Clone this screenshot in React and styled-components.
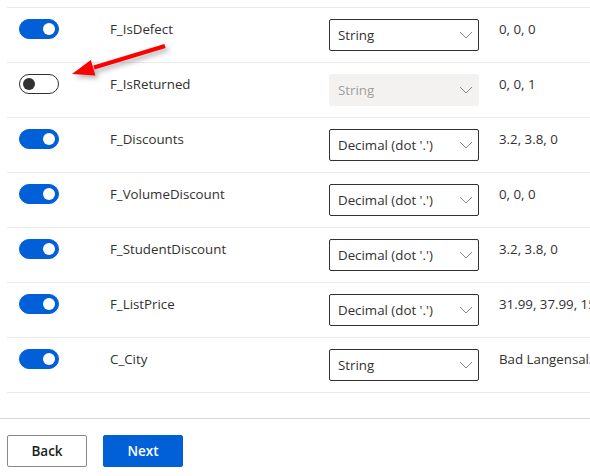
import React from "react";
import styled, { createGlobalStyle } from "styled-components";

const Global = createGlobalStyle`
  html, body { margin: 0; padding: 0; background: #ffffff; overflow: hidden; }
  body { font-family: "Segoe UI", "Open Sans", "Noto Sans", sans-serif; color: #323130; }
`;

const BLUE = "#0160d8";

const Page = styled.div`
  position: relative;
  width: 590px;
  height: 476px;
  overflow: hidden;
`;

const List = styled.div`
  margin: 7px 0 0 7px;
  border-top: 1px solid #edebe9;
`;

const Row = styled.div`
  display: grid;
  grid-template-columns: 91px 219px 170px 1fr;
  align-items: start;
  padding: 11px 0 0 12px;
  box-sizing: border-box;
  height: 55px;
  border-bottom: 1px solid #edebe9;
`;

const Toggle = styled.div`
  box-sizing: border-box;
  width: 40px;
  height: 20px;
  border-radius: 10px;
  display: flex;
  align-items: center;
  justify-content: ${(p) => (p.$on ? "flex-end" : "flex-start")};
  padding: 0 3px;
  background: ${(p) => (p.$on ? BLUE : "#ffffff")};
  border: 1px solid ${(p) => (p.$on ? BLUE : "#323130")};
`;

const Knob = styled.span`
  width: 12px;
  height: 12px;
  border-radius: 50%;
  background: ${(p) => (p.$on ? "#ffffff" : "#323130")};
`;

const Name = styled.div`
  font-size: 13.3px;
  line-height: 20px;
  color: #323130;
  white-space: nowrap;
`;

const Select = styled.div`
  box-sizing: border-box;
  width: 150px;
  height: 32px;
  display: flex;
  align-items: center;
  justify-content: space-between;
  padding: 0 5px 1px 8px;
  border-radius: 2px;
  font-size: 13.3px;
  border: 1px solid ${(p) => (p.$disabled ? "#f3f2f1" : "#323130")};
  background: ${(p) => (p.$disabled ? "#f3f2f1" : "#ffffff")};
  color: ${(p) => (p.$disabled ? "#a19f9d" : "#323130")};
`;

const Value = styled.div`
  font-size: 13.3px;
  line-height: 20px;
  color: #323130;
  white-space: nowrap;
  overflow: hidden;
`;

const Footer = styled.div`
  margin-top: 25px;
  border-top: 1px solid #d6d6d6;
  padding: 16px 7px 0;
  display: flex;
  gap: 16px;
`;

const Button = styled.button`
  box-sizing: border-box;
  width: 80px;
  height: 32px;
  border-radius: 2px;
  font-family: inherit;
  font-size: 13.5px;
  font-weight: 600;
  cursor: pointer;
  border: 1px solid ${(p) => (p.$primary ? BLUE : "#8a8886")};
  background: ${(p) => (p.$primary ? BLUE : "#ffffff")};
  color: ${(p) => (p.$primary ? "#ffffff" : "#201f1e")};
`;

const Arrow = styled.svg`
  position: absolute;
  left: 60px;
  top: 36px;
  overflow: visible;
  pointer-events: none;
  filter: drop-shadow(3px 3px 2.5px rgba(0, 0, 0, 0.3));
`;

const Chevron = () => (
  <svg width="14" height="8" viewBox="0 0 14 8">
    <path d="M1 1 L7 7 L13 1" fill="none" stroke="#8a8886" strokeWidth="1" />
  </svg>
);

const rows = [
  { on: true, name: "F_IsDefect", type: "String", value: "0, 0, 0" },
  { on: false, name: "F_IsReturned", type: "String", value: "0, 0, 1" },
  { on: true, name: "F_Discounts", type: "Decimal (dot '.')", value: "3.2, 3.8, 0" },
  { on: true, name: "F_VolumeDiscount", type: "Decimal (dot '.')", value: "0, 0, 0" },
  { on: true, name: "F_StudentDiscount", type: "Decimal (dot '.')", value: "3.2, 3.8, 0" },
  { on: true, name: "F_ListPrice", type: "Decimal (dot '.')", value: "31.99, 37.99, 15.99" },
  { on: true, name: "C_City", type: "String", value: "Bad Langensalza, Berlin" },
];

export default function App() {
  return (
    <Page>
      <Global />
      <List>
        {rows.map((r) => (
          <Row key={r.name}>
            <Toggle $on={r.on}>
              <Knob $on={r.on} />
            </Toggle>
            <Name>{r.name}</Name>
            <Select $disabled={!r.on}>
              <span>{r.type}</span>
              <Chevron />
            </Select>
            <Value>{r.value}</Value>
          </Row>
        ))}
      </List>
      <Footer>
        <Button>Back</Button>
        <Button $primary>Next</Button>
      </Footer>
      <Arrow width="120" height="50" viewBox="0 0 120 50">
        <line x1="105" y1="10" x2="34" y2="31.5" stroke="#ff0000" strokeWidth="4" />
        <polygon points="12,38 35.4,39.4 30.8,24" fill="#ff0000" />
      </Arrow>
    </Page>
  );
}
